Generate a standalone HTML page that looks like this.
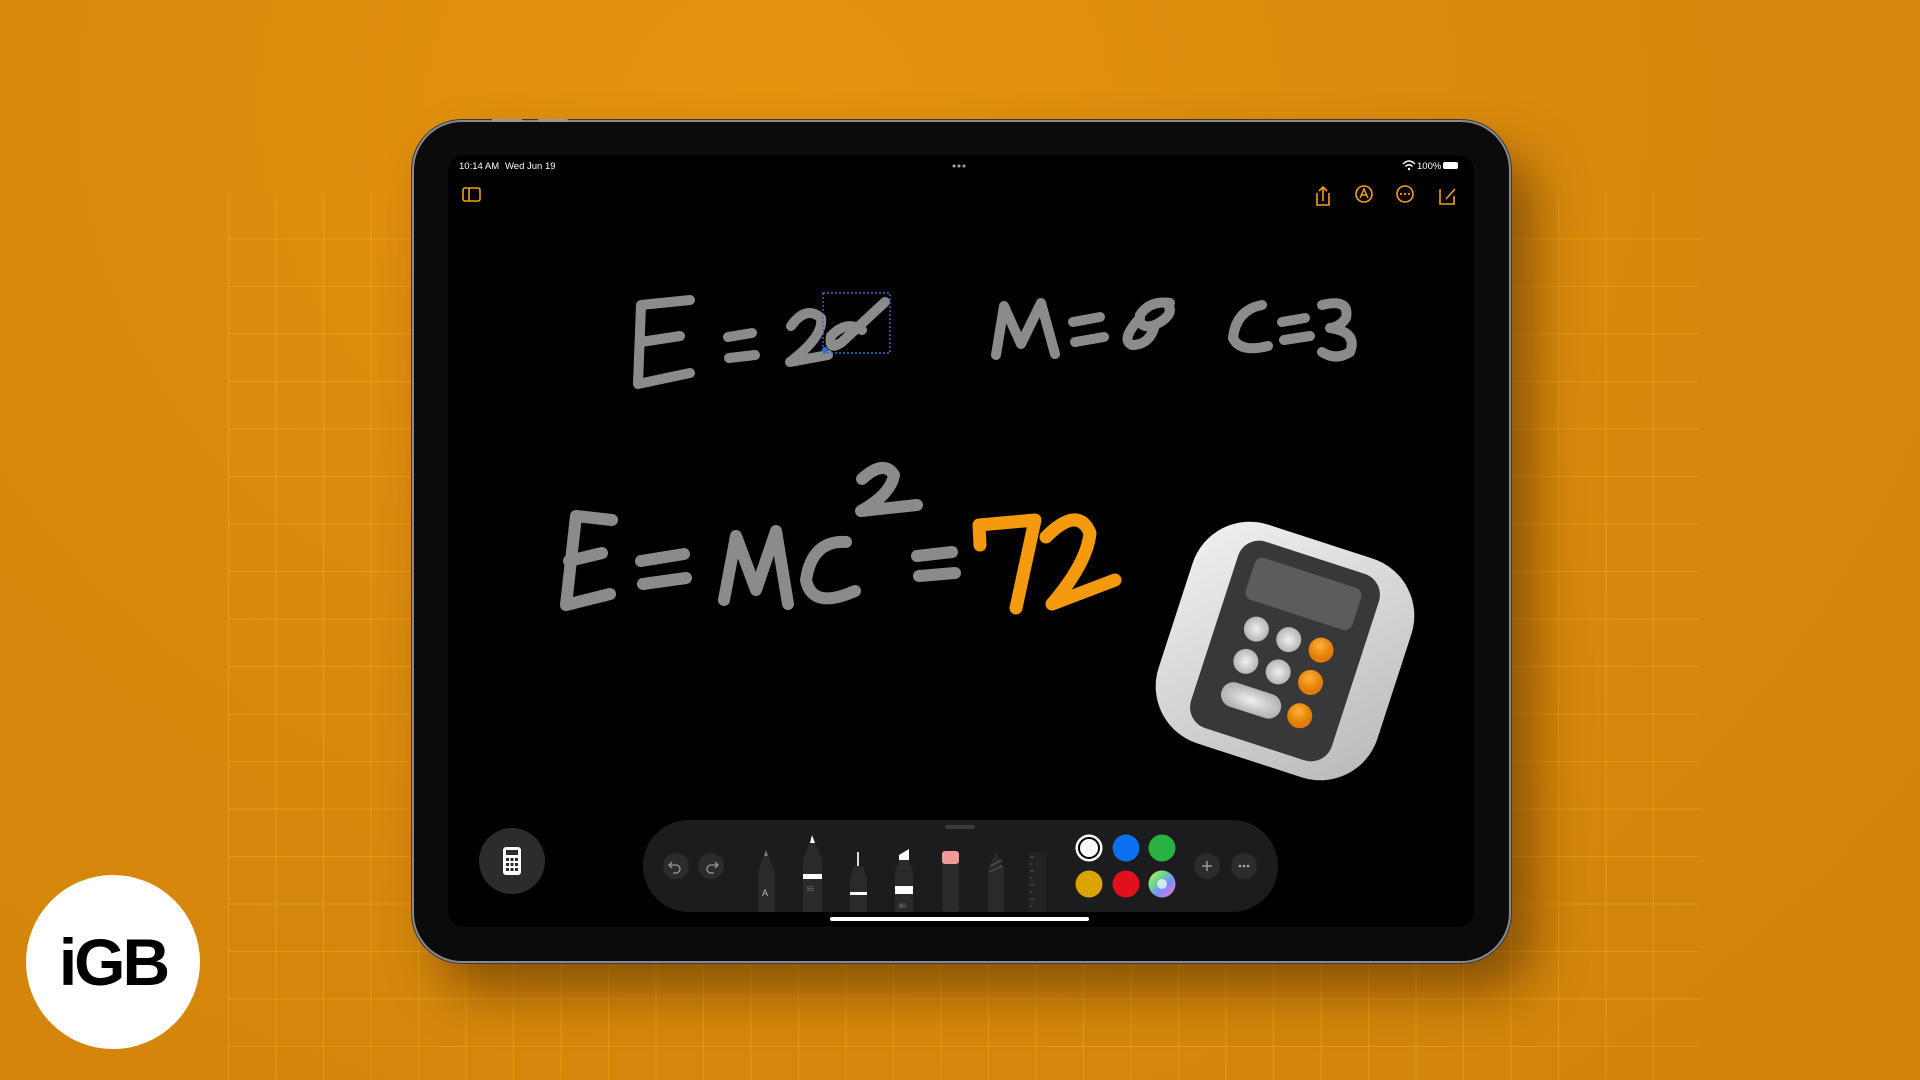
<!DOCTYPE html>
<html><head><meta charset="utf-8">
<style>
html,body{margin:0;padding:0;width:1920px;height:1080px;overflow:hidden}
body{background:radial-gradient(ellipse at 40% 10%,#e4930f 0%,#d98a0c 50%,#d0820a 100%);font-family:"Liberation Sans",sans-serif;position:relative}
.grid{position:absolute;left:228px;top:193px;width:1470px;height:887px;
background-image:linear-gradient(to right,rgba(255,200,40,.3) 1px,transparent 1px),linear-gradient(to bottom,rgba(255,200,40,.3) 1px,transparent 1px);
background-size:47.5px 47.5px;background-position:0 -2px;}
.dev{position:absolute;left:414px;top:122px;width:1095px;height:839px;border-radius:48px;background:#0b0b0c;
box-shadow:0 0 0 2px #8a8a8e,0 0 0 3px #3a3a3c,25px 30px 50px rgba(60,30,0,.5);}
.scr{position:absolute;left:448px;top:155px;width:1026px;height:772px;border-radius:16px;background:#000;overflow:hidden}
.logo{position:absolute;left:26px;top:875px;width:174px;height:174px;border-radius:50%;background:#fff;
display:flex;align-items:center;justify-content:center;font-weight:900;font-size:66px;color:#000;letter-spacing:-3px;font-family:"Liberation Sans",sans-serif}
</style></head><body>
<div class="grid"></div>
<div class="dev"></div>
<div class="scr"></div>
<svg width="1920" height="1080" style="position:absolute;left:0;top:0" xmlns="http://www.w3.org/2000/svg">
<g font-family="Liberation Sans" fill="#fff" font-size="9.5">
<text x="459" y="169">10:14 AM</text><text x="505" y="169">Wed Jun 19</text>
<text x="1417" y="169">100%</text>
</g>
<g fill="#aaa"><circle cx="954" cy="166" r="1.5"/><circle cx="959" cy="166" r="1.5"/><circle cx="964" cy="166" r="1.5"/></g>
<path d="M1403,164 q6,-6 12,0 M1405.5,166.5 q3.5,-3.5 7,0" stroke="#fff" stroke-width="1.4" fill="none"/><circle cx="1409" cy="169" r="1.2" fill="#fff"/>
<rect x="1443" y="162" width="15" height="7" rx="2" fill="#fff"/>
<g stroke="#f0a01a" stroke-width="1.6" fill="none">
<rect x="463" y="188" width="17" height="13" rx="2"/><line x1="469" y1="188" x2="469" y2="201"/>
<path d="M1317,193 v12 h12 v-12 M1323,201 v-13 M1319,191 l4,-4 4,4"/>
<circle cx="1364" cy="194" r="8"/>
<circle cx="1405" cy="194" r="8"/>
<path d="M1441,190 h-1 v14 h14 v-8 M1446,199 l9,-10"/>
</g>
<path d="M1360,198 l4,-9 4,9 M1361.5,195 h5" stroke="#f0a01a" stroke-width="1.5" fill="none"/>
<g fill="#f0a01a"><circle cx="1401" cy="194" r="1.1"/><circle cx="1405" cy="194" r="1.1"/><circle cx="1409" cy="194" r="1.1"/></g>
<g stroke="#8b8b8b" stroke-width="10" stroke-linecap="round" stroke-linejoin="round" fill="none">
<path d="M690,300 L641,305 L638,384 L690,373 M641,342 L680,336"/>
<path d="M728,337 L752,333 M729,358 L755,355"/>
<path d="M791,326 Q806,305 821,318 Q824,336 790,362 L828,355"/>
<path d="M885,302 L842,342 Q828,352 831,336 Q846,320 862,330"/>
<path d="M996,355 L1004,306 L1021,344 L1041,303 L1055,354"/>
<path d="M1073,322 L1100,317 M1075,342 L1104,337"/>
<path d="M1170,303 Q1150,300 1140,315 Q1138,330 1155,325 Q1175,315 1168,305 M1140,318 Q1120,340 1132,345 Q1150,345 1155,325"/>
<path d="M1262,305 Q1236,310 1233,338 Q1240,353 1268,346"/>
<path d="M1282,322 L1305,318 M1284,340 L1310,336"/>
<path d="M1322,305 Q1350,298 1346,318 Q1340,327 1330,328 Q1358,332 1350,352 Q1336,361 1322,352"/>
</g>
<rect x="823" y="293" width="67" height="60" fill="none" stroke="#2a6fd6" stroke-width="1.4" stroke-dasharray="2,2"/>
<circle cx="825" cy="350" r="3" fill="#2a6fd6"/>
<g stroke="#8b8b8b" stroke-width="12" stroke-linecap="round" stroke-linejoin="round" fill="none">
<path d="M612,520 L576,516 L566,605 L610,594 M569,561 L602,553"/>
<path d="M641,561 L684,554 M643,584 L686,578"/>
<path d="M724,600 L736,536 L756,590 L776,531 L788,604"/>
<path d="M846,542 Q812,540 806,580 Q812,610 855,591"/>
<path d="M862,479 Q884,459 894,475 Q891,494 861,511 L917,505"/>
<path d="M917,556 L952,552 M919,576 L955,573"/>
</g>
<g stroke="#f59a0c" stroke-width="13" stroke-linecap="round" stroke-linejoin="round" fill="none">
<path d="M980,545 L979,525 L1035,520 L1016,608"/>
<path d="M1046,537 Q1078,505 1090,533 Q1087,563 1052,604 L1115,580"/>
</g>
<defs>
<linearGradient id="ig" x1="0" y1="0" x2="1" y2="1"><stop offset="0" stop-color="#f2f2f2"/><stop offset="1" stop-color="#b8b8b8"/></linearGradient>
<radialGradient id="bg"><stop offset="0" stop-color="#f0f0f0"/><stop offset="1" stop-color="#b5b5b5"/></radialGradient>
<radialGradient id="og" cx=".4" cy=".35"><stop offset="0" stop-color="#ffb13a"/><stop offset="1" stop-color="#e07d00"/></radialGradient>
</defs>
<g transform="translate(1285,651) rotate(18)">
<rect x="-115" y="-115" width="230" height="230" rx="60" fill="url(#ig)"/>
<rect x="-74" y="-98" width="148" height="196" rx="22" fill="#38383a"/>
<rect x="-56" y="-82" width="112" height="44" rx="8" fill="#5c5c5e"/>
<circle cx="-34" cy="-12" r="12.5" fill="url(#bg)"/><circle cx="0" cy="-12" r="12.5" fill="url(#bg)"/><circle cx="34" cy="-12" r="12.5" fill="url(#og)"/>
<circle cx="-34" cy="22" r="12.5" fill="url(#bg)"/><circle cx="0" cy="22" r="12.5" fill="url(#bg)"/><circle cx="34" cy="22" r="12.5" fill="url(#og)"/>
<rect x="-48" y="45" width="62" height="25" rx="12.5" fill="url(#bg)"/><circle cx="34" cy="57" r="12.5" fill="url(#og)"/>
</g>
<circle cx="512" cy="861" r="33" fill="#2c2c2e"/>
<rect x="503" y="847" width="18" height="28" rx="3" fill="#fff"/>
<rect x="506" y="850" width="12" height="5" fill="#2c2c2e"/>
<g fill="#2c2c2e"><rect x="506" y="858" width="3" height="3"/><rect x="510.5" y="858" width="3" height="3"/><rect x="515" y="858" width="3" height="3"/>
<rect x="506" y="863" width="3" height="3"/><rect x="510.5" y="863" width="3" height="3"/><rect x="515" y="863" width="3" height="3"/>
<rect x="506" y="868" width="3" height="3"/><rect x="510.5" y="868" width="3" height="3"/><rect x="515" y="868" width="3" height="3"/></g>
<rect x="643" y="820" width="635" height="92" rx="46" fill="#1c1c1e"/>
<rect x="945" y="825" width="30" height="4" rx="2" fill="#3a3a3c"/>
<circle cx="676" cy="866" r="13" fill="#2c2c2e"/><circle cx="711" cy="866" r="13" fill="#2c2c2e"/>
<path d="M672,862 l-3,3 3,3 M669,865 h7 a4,4 0 0 1 0,8 h-3" stroke="#999" stroke-width="1.3" fill="none"/>
<path d="M715,862 l3,3 -3,3 M718,865 h-7 a4,4 0 0 0 0,8 h3" stroke="#999" stroke-width="1.3" fill="none"/>
<path d="M758,912 L758,872 L766,850 L775,872 L775,912 Z" fill="#2a2a2c"/><path d="M764,856 L766,850 L768,856 Z" fill="#777"/>
<text x="762" y="896" font-size="9" fill="#bbb" font-family="Liberation Sans">A</text>
<path d="M803,912 L803,860 L810,842 L815,842 L822,860 L822,912 Z" fill="#2a2a2c"/><path d="M810,843 L812,835 L815,843 Z" fill="#fff"/>
<rect x="803" y="874" width="19" height="5" fill="#fff"/><text x="807" y="891" font-size="6" fill="#888">55</text>
<path d="M850,912 L850,880 L854,866 L863,866 L867,880 L867,912 Z" fill="#2a2a2c"/><rect x="857" y="852" width="2" height="14" fill="#ddd"/>
<rect x="850" y="892" width="17" height="3" fill="#fff"/>
<path d="M895,912 L895,870 L899,862 L899,854 L909,849 L909,862 L913,870 L913,912 Z" fill="#2a2a2c"/><path d="M899,855 L909,849 L909,860 L899,860 Z" fill="#fff"/>
<rect x="895" y="886" width="18" height="8" fill="#fff"/><text x="899" y="908" font-size="6" fill="#888">80</text>
<rect x="942" y="851" width="17" height="61" rx="3" fill="#2a2a2c"/><rect x="942" y="851" width="17" height="13" rx="3" fill="#f09a9a"/>
<path d="M988,912 L988,870 L996,851 L1004,870 L1004,912 Z" fill="#2a2a2c"/><path d="M990,866 L1002,860 M989,872 L1003,866" stroke="#555" stroke-width="1.2"/>
<rect x="1028" y="852" width="18" height="60" fill="#222"/>
<g stroke="#555" stroke-width="1"><line x1="1030" y1="857" x2="1034" y2="857"/><line x1="1030" y1="864" x2="1032" y2="864"/><line x1="1030" y1="871" x2="1034" y2="871"/><line x1="1030" y1="878" x2="1032" y2="878"/><line x1="1030" y1="885" x2="1034" y2="885"/><line x1="1030" y1="892" x2="1032" y2="892"/><line x1="1030" y1="899" x2="1034" y2="899"/><line x1="1030" y1="906" x2="1032" y2="906"/></g>
<circle cx="1089" cy="848" r="13" fill="#fff" stroke="#fff" stroke-width="1"/><circle cx="1089" cy="848" r="10" fill="#fff" stroke="#000" stroke-width="2"/>
<circle cx="1126" cy="848" r="13.5" fill="#0a6ff0"/><circle cx="1162" cy="848" r="13.5" fill="#29b043"/>
<circle cx="1089" cy="884" r="13.5" fill="#d9a400"/><circle cx="1126" cy="884" r="13.5" fill="#e0101c"/>
<defs><linearGradient id="cw" x1="0" y1="0" x2="1" y2="1"><stop offset="0" stop-color="#ffe066"/><stop offset=".3" stop-color="#6fe07f"/><stop offset=".6" stop-color="#7a8cff"/><stop offset="1" stop-color="#ff7acb"/></linearGradient></defs>
<circle cx="1162" cy="884" r="13.5" fill="url(#cw)"/><circle cx="1162" cy="884" r="5" fill="#fff" opacity=".7"/>
<circle cx="1207" cy="866" r="13" fill="#2c2c2e"/><path d="M1202,866 h10 M1207,861 v10" stroke="#999" stroke-width="1.5"/>
<circle cx="1244" cy="866" r="13" fill="#2c2c2e"/>
<g fill="#aaa"><circle cx="1240" cy="866" r="1.3"/><circle cx="1244" cy="866" r="1.3"/><circle cx="1248" cy="866" r="1.3"/></g>
<rect x="830" y="917" width="259" height="4" rx="2" fill="#fff"/>
<rect x="492" y="119" width="30" height="3" rx="1" fill="#999"/><rect x="538" y="119" width="30" height="3" rx="1" fill="#999"/>
</svg>
<div class="logo">iGB</div>
</body></html>
